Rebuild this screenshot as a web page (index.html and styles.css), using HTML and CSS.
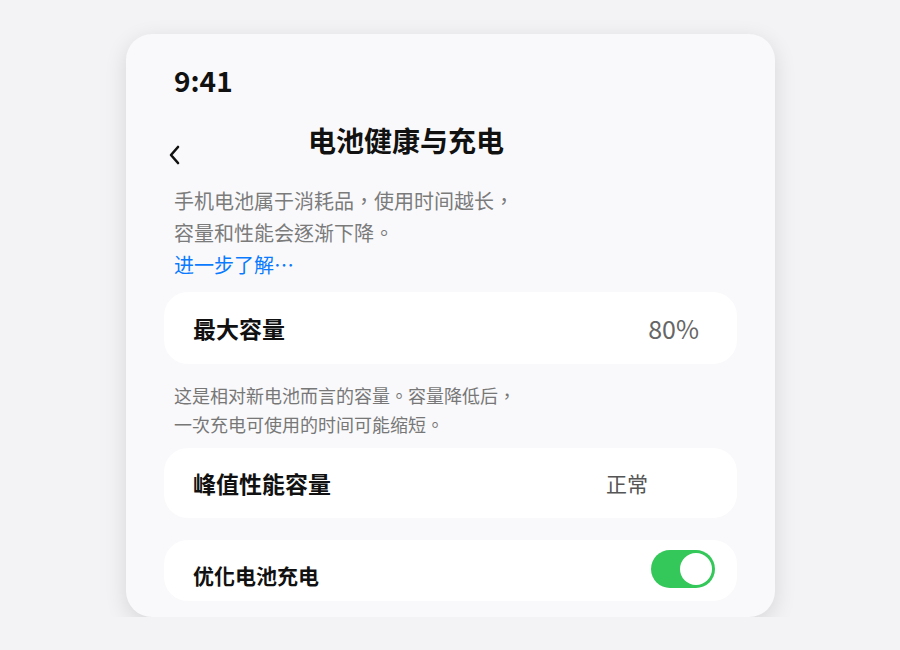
FILE: index.html
```html
<!DOCTYPE html>
<html>
<head>
    <link rel="stylesheet" href="styles.css">
</head>
<body>
    <div class="phone">
        <div class="status">9:41</div>

        <div class="nav">
            <span class="back">
                <svg width="12" height="20" viewBox="0 0 12 20">
                    <polyline points="10,2 3,10 10,18" fill="none" stroke="#111" stroke-width="2.6" stroke-linecap="round" stroke-linejoin="round"/>
                </svg>
            </span>
            <h1>电池健康与充电</h1>
        </div>

        <p class="intro">
            手机电池属于消耗品，使用时间越长，<br>
            容量和性能会逐渐下降。<br>
            <a class="more">进一步了解…</a>
        </p>

        <div class="row">
            <span class="label">最大容量</span>
            <span class="value pct">80%</span>
        </div>

        <p class="note">
            这是相对新电池而言的容量。容量降低后，<br>
            一次充电可使用的时间可能缩短。
        </p>

        <div class="row row-peak">
            <span class="label">峰值性能容量</span>
            <span class="value state">正常</span>
        </div>

        <div class="row row-toggle">
            <span class="label">优化电池充电</span>
            <span class="switch on"><span class="knob"></span></span>
        </div>
    </div>
</body>
</html>
```

FILE: styles.css
```css
body {
    margin: 0;
    background-color: #f3f3f5;
    font-family: "Noto Sans CJK TC", "Noto Sans CJK SC", "Noto Sans", sans-serif;
    color: #111;
}

.phone {
    width: 649px;
    height: 583px;
    margin: 34px 0 0 126px;
    padding: 30px 38px 0 38px;
    box-sizing: border-box;
    background-color: #f9f9fb;
    border-radius: 26px;
    box-shadow: 0 6px 22px rgba(0, 0, 0, 0.12);
    overflow: hidden;
}

.status {
    padding-left: 10px;
    font-size: 28px;
    font-weight: 700;
    line-height: 32px;
}

.nav {
    display: flex;
    align-items: flex-start;
    height: 40px;
    margin-top: 24px;
}

.back {
    display: block;
    width: 24px;
    margin: 25px 0 0 4px;
}

.back svg {
    display: block;
}

.nav h1 {
    margin: 0 0 0 116px;
    font-size: 28px;
    font-weight: 700;
    line-height: 40px;
}

.intro {
    margin: 25px 0 11px 0;
    padding: 0 10px;
    font-size: 20px;
    line-height: 32px;
    color: #7b7b7b;
}

.more {
    color: #0a7aff;
    text-decoration: none;
}

.row {
    display: flex;
    align-items: center;
    justify-content: space-between;
    height: 72px;
    padding: 0 38px 0 29px;
    box-sizing: border-box;
    background-color: #fff;
    border-radius: 24px;
}

.label {
    font-size: 23px;
    font-weight: 700;
}

.value {
    color: #666;
}

.pct {
    font-size: 25px;
}

.note {
    margin: 17px 0 9px 0;
    padding: 0 10px;
    font-size: 18px;
    line-height: 29px;
    color: #777;
}

.row-peak {
    height: 70px;
    padding-right: 89px;
}

.state {
    font-size: 21px;
    color: #555;
}

.row-toggle {
    height: 61px;
    margin-top: 22px;
    align-items: flex-start;
    padding: 10px 22px 0 29px;
}

.row-toggle .label {
    margin-top: 10px;
    font-size: 21px;
}

.switch {
    display: flex;
    justify-content: flex-end;
    width: 64px;
    height: 38px;
    padding: 3px;
    box-sizing: border-box;
    border-radius: 19px;
    background-color: #ddd;
}

.switch.on {
    background-color: #34c759;
}

.knob {
    width: 32px;
    height: 32px;
    border-radius: 50%;
    background-color: #fff;
}
```
